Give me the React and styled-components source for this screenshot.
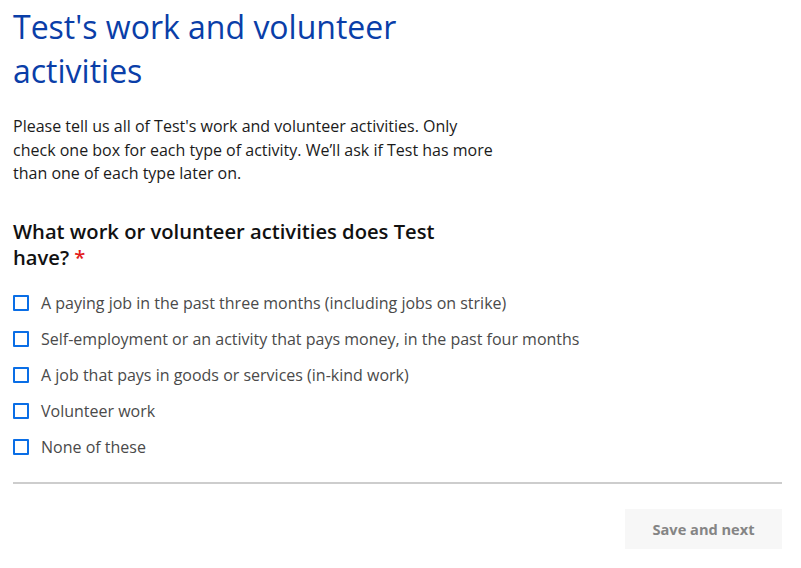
import styled, { createGlobalStyle } from "styled-components";

const options = [
  "A paying job in the past three months (including jobs on strike)",
  "Self-employment or an activity that pays money, in the past four months",
  "A job that pays in goods or services (in-kind work)",
  "Volunteer work",
  "None of these",
];

export default function App() {
  return (
    <>
      <GlobalStyle />
      <StyledPage>
        <StyledIntro>
          <StyledTitle>Test's work and volunteer activities</StyledTitle>
          <StyledText>
            Please tell us all of Test's work and volunteer activities. Only
            check one box for each type of activity. We’ll ask if Test has more
            than one of each type later on.
          </StyledText>
        </StyledIntro>
        <StyledFieldset>
          <StyledQuestion>
            What work or volunteer activities does Test have?
            <StyledRequired>*</StyledRequired>
          </StyledQuestion>
          <StyledList>
            {options.map((option, index) => (
              <StyledOption key={option} htmlFor={`activity-${index}`}>
                <StyledCheckbox id={`activity-${index}`} type="checkbox" />
                {option}
              </StyledOption>
            ))}
          </StyledList>
        </StyledFieldset>
        <StyledDivider />
        <StyledFooter>
          <StyledNextButton type="button">Save and next</StyledNextButton>
        </StyledFooter>
      </StyledPage>
    </>
  );
}

const GlobalStyle = createGlobalStyle`
  body {
    margin: 0;
    background: white;
    font-family: "Open Sans", "Noto Sans", sans-serif;
    color: #1b1b1b;
  }
`;

const StyledPage = styled.main`
  padding: 0 19px 0 13px;
`;

const StyledIntro = styled.div`
  max-width: 482px;
`;

const StyledTitle = styled.h1`
  margin: 0;
  padding-top: 5px;
  font-size: 32px;
  font-weight: 400;
  line-height: 44px;
  color: #0a3ea8;
`;

const StyledText = styled.p`
  margin: 22px 0 0;
  font-size: 16px;
  line-height: 23.5px;
`;

const StyledFieldset = styled.fieldset`
  border: none;
  margin: 32px 0 0;
  padding: 0;
  min-width: 0;
`;

const StyledQuestion = styled.h2`
  margin: 0;
  max-width: 450px;
  font-size: 20.2px;
  font-weight: 600;
  line-height: 26px;
  color: #111;
`;

const StyledRequired = styled.span`
  margin-left: 5px;
  color: #e31c1c;
`;

const StyledList = styled.div`
  display: flex;
  flex-direction: column;
  gap: 12px;
  margin-top: 21px;
`;

const StyledOption = styled.label`
  display: flex;
  align-items: center;
  gap: 12px;
  height: 24px;
  font-size: 16px;
  color: #4a4a4a;
  cursor: pointer;
`;

const StyledCheckbox = styled.input`
  appearance: none;
  margin: 0;
  width: 16px;
  height: 16px;
  border: 2px solid #0a6ee6;
  border-radius: 1px;
  background: white;
  flex-shrink: 0;
`;

const StyledDivider = styled.hr`
  margin: 23px 0 0;
  border: none;
  height: 2px;
  background: #cdcdcd;
`;

const StyledFooter = styled.div`
  display: flex;
  justify-content: flex-end;
  padding-top: 25px;
`;

const StyledNextButton = styled.button`
  width: 157px;
  height: 40px;
  border: none;
  background: #f7f7f7;
  color: #858585;
  font-family: "Open Sans", sans-serif;
  font-size: 14.6px;
  font-weight: 700;
  cursor: pointer;
`;
